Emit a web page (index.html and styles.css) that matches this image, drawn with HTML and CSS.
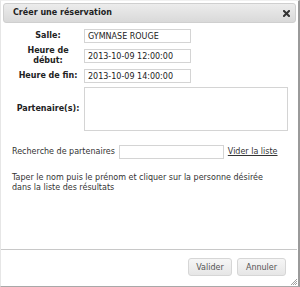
FILE: index.html
```html
<!DOCTYPE html>
<html lang="fr">
<head>
<meta charset="utf-8">
<title>Créer une réservation</title>
<link rel="stylesheet" href="styles.css">
</head>
<body>
<div class="dialog">
  <div class="titlebar">
    <span class="title">Créer une réservation</span>
    <span class="close" aria-label="Fermer"><svg width="7" height="7" viewBox="0 0 7 7"><path d="M1 1L6 6M6 1L1 6" stroke="#333" stroke-width="2" stroke-linecap="square"/></svg></span>
  </div>
  <div class="content">
    <table class="form">
      <tr><th>Salle:</th><td><input class="field" type="text" value="GYMNASE ROUGE"></td></tr>
      <tr><th>Heure de début:</th><td><input class="field" type="text" value="2013-10-09 12:00:00"></td></tr>
      <tr><th>Heure de fin:</th><td><input class="field" type="text" value="2013-10-09 14:00:00"></td></tr>
      <tr><th>Partenaire(s):</th><td><div class="area"><span class="grip"></span></div></td></tr>
    </table>
    <div class="search">
      <span>Recherche de partenaires</span>
      <input class="search-input" type="text">
      <a class="clear" href="#">Vider la liste</a>
    </div>
    <p class="help">Taper le nom puis le prénom et cliquer sur la personne désirée dans la liste des résultats</p>
  </div>
  <div class="buttonpane">
    <button class="btn">Valider</button>
    <button class="btn">Annuler</button>
  </div>
  <svg class="resize" width="6" height="6" viewBox="0 0 6 6"><path d="M6 0L0 6M6 2L2 6M6 4L4 6" stroke="#888" stroke-width="0.8"/></svg>
</div>
</body>
</html>
```

FILE: styles.css
```css
html, body {
  margin: 0;
  padding: 0;
  background: #fff;
}
body {
  font-family: "DejaVu Sans", Verdana, sans-serif;
  font-size: 8px;
  color: #222;
}
.dialog {
  position: relative;
  box-sizing: border-box;
  width: 300px;
  height: 287px;
  border-left: 1px solid #e6e6e6;
  border-top: 1px solid #f0f0f0;
  border-right: 2px solid #9a9a9a;
  border-bottom: 1px solid #a8a8a8;
  padding: 2px 2px 0 2px;
  display: flex;
  flex-direction: column;
  background: #fff;
}
.titlebar {
  box-sizing: border-box;
  height: 20px;
  display: flex;
  align-items: center;
  justify-content: space-between;
  padding: 0 5px 0 9px;
  border: 1px solid #cfcfcf;
  border-radius: 3px;
  background: linear-gradient(#ececec, #d9d9d9);
}
.title {
  font-weight: bold;
  color: #222;
  line-height: 10px;
}
.close {
  display: flex;
  width: 7px;
  height: 7px;
  margin-top: 1px;
}
.content {
  flex: 1;
  padding: 3px 0 0 9px;
}
.form {
  border-collapse: separate;
  border-spacing: 0 2px;
}
.form th {
  width: 70px;
  padding: 0 1px;
  text-align: center;
  font-weight: bold;
  line-height: 10px;
  color: #222;
}
.form td {
  padding: 1px 0;
  vertical-align: middle;
}
.field {
  display: block;
  box-sizing: border-box;
  width: 107px;
  height: 14px;
  margin: 0;
  padding: 0 3px;
  border: 1px solid #d4d4d4;
  font-family: "DejaVu Sans", Verdana, sans-serif;
  font-size: 8px;
  color: #222;
  background: #fff;
  outline: none;
}
.area {
  position: relative;
  box-sizing: border-box;
  width: 204px;
  height: 44px;
  border: 1px solid #d4d4d4;
  background: #fff;
}
.grip {
  position: absolute;
  right: 2px;
  bottom: 2px;
  width: 3px;
  height: 3px;
  background: radial-gradient(circle, #bbb 40%, transparent 45%) 0 0 / 1.5px 1.5px;
}
.search {
  display: flex;
  align-items: center;
  margin-top: 11px;
  line-height: 10px;
  color: #333;
}
.search-input {
  box-sizing: border-box;
  width: 105px;
  height: 14px;
  margin: 0 4px 0 4px;
  padding: 0 2px;
  border: 1px solid #d4d4d4;
  font-family: "DejaVu Sans", Verdana, sans-serif;
  font-size: 8px;
  outline: none;
}
.clear {
  color: #333;
  text-decoration: underline;
}
.help {
  margin: 14px 0 0 0;
  width: 270px;
  line-height: 10px;
  color: #333;
}
.buttonpane {
  box-sizing: border-box;
  height: 37px;
  margin: 0 -1px 0 -2px;
  border-top: 1px solid #c8c8c8;
  display: flex;
  justify-content: flex-end;
  align-items: flex-start;
  gap: 5px;
  padding: 8px 11px 0 0;
}
.btn {
  box-sizing: border-box;
  height: 18px;
  margin: 0;
  padding: 0 7px;
  border: 1px solid #d6d6d6;
  border-radius: 3px;
  background: linear-gradient(#f6f6f6, #e6e6e6);
  font-family: "DejaVu Sans", Verdana, sans-serif;
  font-size: 8px;
  color: #555;
}
.btn:first-child {
  width: 44px;
}
.btn:last-child {
  width: 49px;
}
.resize {
  position: absolute;
  right: 1px;
  bottom: 1px;
}
```
